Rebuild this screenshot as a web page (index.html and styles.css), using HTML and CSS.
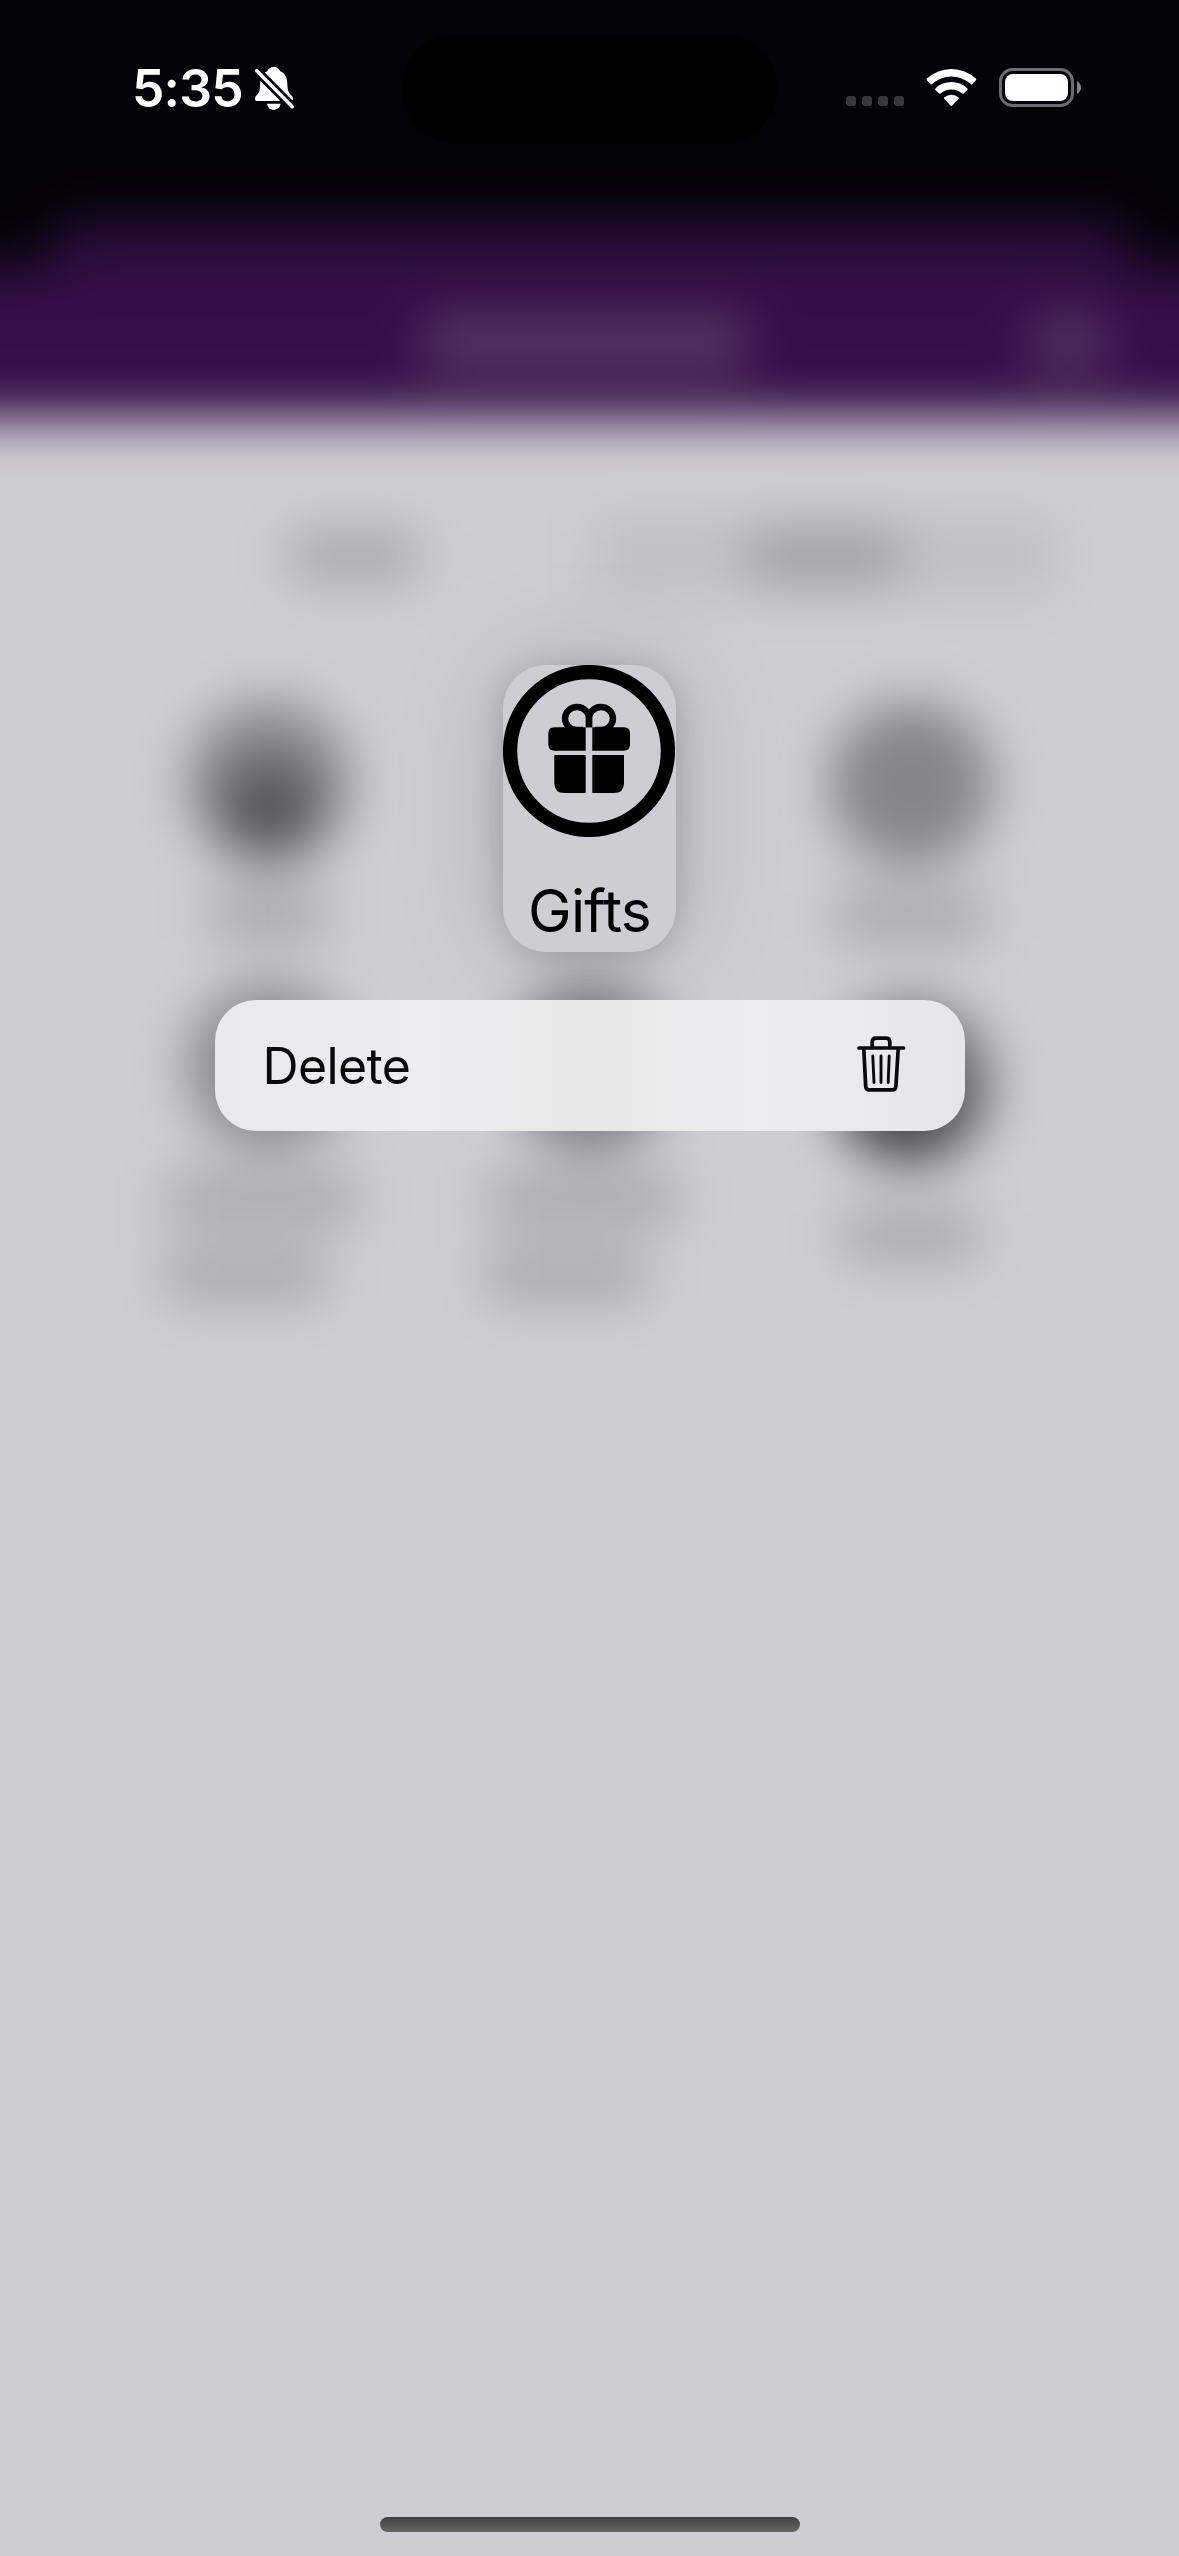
FILE: index.html
```html
<!DOCTYPE html>
<html lang="en">
<head>
<meta charset="utf-8">
<title>Gifts</title>
<link rel="stylesheet" href="styles.css">
</head>
<body>
<div class="phone">
  <div class="backdrop" aria-hidden="true">
    <div class="sheet">
      <div class="nav"><i class="nav-title"></i><i class="nav-action"></i></div>
      <div class="tabs">
        <div class="tab"><i class="bar tab-one"></i></div>
        <div class="tab tab-active"><i class="bar tab-two"></i></div>
      </div>
      <div class="tiles">
        <div class="tile"><i class="disc disc-person"></i><i class="bar w110"></i></div>
        <div class="tile"></div>
        <div class="tile"><i class="disc disc-solid"></i><i class="bar w130"></i></div>
      </div>
      <div class="tiles second">
        <div class="tile"><i class="disc"></i><i class="bar w190"></i><i class="bar w160"></i></div>
        <div class="tile"><i class="disc disc-mid"></i><i class="bar w190"></i><i class="bar w160"></i></div>
        <div class="tile tile-last"><i class="disc disc-dark"></i><i class="bar w125"></i></div>
      </div>
    </div>
  </div>

  <div class="screen">
    <header class="status">
      <div class="status-left">
        <span class="time">5:35</span>
        <svg class="bell" viewBox="0 0 40 44">
          <path fill="#fff" d="M19.7 1C23 1 25.500 3 26.300 5.300C31 7 33 11.500 33.300 17C33.500 23 34 26 36.500 28.500L38.600 31C39.800 33 39 35 36.500 35H3.500C1 35 .2 32.800 1.200 31C2.400 29 4.500 28 5.500 24.500C6.500 21 5.500 15 7.500 11C8.700 8 10.800 6.200 13.200 5.300C14 3 16.500 1 19.700 1ZM13 37.700H26.500C26 41.500 23.500 43.700 19.700 43.700S13.500 41.500 13 37.700Z"/>
          <path stroke="#030207" stroke-width="9" d="M0 2L41 43.400"/>
          <path stroke="#fff" stroke-width="3.500" stroke-linecap="round" d="M2.700 4.700L38.300 40.700"/>
        </svg>
      </div>
      <div class="island"></div>
      <div class="status-right">
        <div class="signal"><i></i><i></i><i></i><i></i></div>
        <svg class="wifi" viewBox="0 0 51 39" fill="#fff">
          <path d="M.9 12.200Q.3 11.300 1 10.600A35.500 35.500 0 0 1 49.800 10.600Q50.500 11.300 49.900 12.200L46.200 16.200Q45.500 16.800 44.700 16.100A28.500 28.500 0 0 0 6.100 16.100Q5.300 16.800 4.600 16.200Z"/>
          <path d="M9.400 21.900Q8.800 21.100 9.500 20.400A22.800 22.800 0 0 1 41.300 20.400Q42 21.100 41.400 21.900L37.700 25.500Q37 26.100 36.200 25.500A16.500 16.500 0 0 0 14.600 25.500Q13.800 26.100 13.100 25.500Z"/>
          <path d="M18.200 30.900Q17.600 30 18.400 29.300A10.500 10.500 0 0 1 32.400 29.300Q33.200 30 32.600 30.900L26.200 37.600Q25.400 38.300 24.600 37.600Z"/>
        </svg>
        <svg class="battery" viewBox="0 0 83 39">
          <rect x="1.500" y="1.500" width="72" height="36" rx="12" fill="none" stroke="#6c6b6e" stroke-width="3"/>
          <rect x="6" y="6" width="63" height="27" rx="8" fill="#fff"/>
          <path d="M78 13Q82 15.500 82 19.500T78 26Z" fill="#848386"/>
        </svg>
      </div>
    </header>

    <main class="content">
      <div class="preview">
        <svg class="gift" viewBox="0 0 172 172">
          <circle cx="86" cy="86" r="78.900" fill="none" stroke="#000" stroke-width="14.300"/>
          <g fill="none" stroke="#000" stroke-width="6.400">
            <path d="M86 62.300V54A12 11.500 0 1 0 73.800 65H80"/>
            <path d="M86 62.300V54A12 11.500 0 1 1 98.200 65H92"/>
          </g>
          <path d="M51.500 62.300H82.700V85.700H51.500Q45.300 85.700 45.300 79.500V68.500Q45.300 62.300 51.500 62.300ZM89.300 62.300H120.800Q127 62.300 127 68.500V79.500Q127 85.700 120.800 85.700H89.300ZM51.300 90H82.700V128H61.500Q51.300 128 51.300 118ZM89.300 90H121V118Q121 128 110.800 128H89.300Z"/>
        </svg>
        <span class="preview-label">Gifts</span>
      </div>
      <div class="menu">
        <span class="menu-label">Delete</span>
        <svg class="trash" viewBox="0 0 50 58" fill="none" stroke="#0a0a0a" stroke-linecap="round" stroke-linejoin="round">
          <path stroke-width="3.700" d="M3 13H47.500M7.800 14L9.700 51.300Q10 54.900 13.600 54.900H36Q39.600 54.900 39.900 51.300L42.200 14M16.200 12V7Q16.200 3.200 20 3.200H30Q33.800 3.200 33.800 7V12"/>
          <path stroke-width="2.900" d="M16.800 21L18 47.500M25 21V47.500M33.200 21L32.200 47.500"/>
        </svg>
      </div>
    </main>
    <div class="home"></div>
  </div>
</div>
</body>
</html>
```
FILE: styles.css
```css
* { box-sizing: border-box; }
body { margin: 0; font-family: Inter, "Liberation Sans", sans-serif; }
i, svg { display: block; flex: none; }

.phone {
  position: relative;
  width: 1179px;
  height: 2556px;
  overflow: hidden;
  background: #cecdd2;
}

/* Dimmed, blurred app behind the context menu */
.backdrop {
  position: absolute;
  inset: -100px;
  padding-top: 322px;
  background: #030207;
  filter: blur(26px);
}
.sheet {
  height: 2534px;
  margin: 0 -100px;
  padding: 0 200px;
  background: #cecdd2;
}
.nav {
  display: flex;
  align-items: center;
  justify-content: flex-end;
  gap: 282px;
  height: 197px;
  margin: 0 -200px;
  padding: 44px 270px 0 0;
  background:
    linear-gradient(#030207, #030207) 0 0 / 255px 42px no-repeat,
    linear-gradient(#030207, #030207) 100% 0 / 255px 42px no-repeat,
    linear-gradient(#2b0e3b, #340f4a 45%, #351049);
}
.nav-title { width: 322px; height: 56px; background: #563967; }
.nav-action { width: 80px; height: 56px; background: #543765; border-radius: 24px; }

.tabs {
  display: flex;
  height: 84px;
  margin: 95px 119px 0;
}
.tab { flex: 1; display: flex; align-items: center; justify-content: center; }
.tab-active { background: #c1c0c5; }
.bar { height: 50px; background: #a7a6ab; }
.tab-one { width: 130px; }
.tab-two { width: 150px; background: #9e9da2; }

.tiles {
  display: grid;
  grid-template-columns: repeat(3, 321px);
  justify-content: center;
  margin-top: 102px;
}
.tiles.second { margin-top: 42px; }
.tile { display: flex; flex-direction: column; align-items: center; gap: 26px; }
.disc { width: 164px; height: 164px; border-radius: 50%; background: #89888d; }
.disc-mid { background: #77767b; }
.disc-solid { margin-top: 2px; background: #86858a; }
.disc-person { background: radial-gradient(circle at 50% 66%, #505054 18%, #8b8a8f 48%); }
.disc-dark { background: radial-gradient(circle at 44% 68%, #454549 24%, #78777b 60%); }
.tile-last { padding-top: 16px; gap: 46px; }
.w110 { width: 115px; }
.w130 { width: 150px; }
.w190 { width: 190px; margin-right: 14px; }
.w160 { width: 160px; margin-right: 48px; }
.w125 { width: 135px; }

/* Sharp foreground */
.screen {
  position: relative;
  display: flex;
  flex-direction: column;
  align-items: center;
  height: 100%;
}
.status {
  display: grid;
  grid-template-columns: 402px 375px 402px;
  width: 100%;
  height: 144px;
  padding-top: 34px;
}
.status-left { display: flex; padding: 23px 0 0 132px; }
.time {
  width: 122px;
  font-size: 51.5px;
  line-height: 62px;
  font-weight: 560;
  letter-spacing: -.8px;
  color: #fff;
}
.bell { width: 40px; height: 44px; margin-top: 9px; }
.island { height: 110px; border-radius: 55px; background: #000; }
.status-right { display: flex; padding: 34px 0 0 69px; }
.signal { display: flex; gap: 6px; padding-top: 28px; }
.signal i { width: 10px; height: 10px; border-radius: 3.5px; background: #39383d; }
.wifi { width: 51px; height: 39px; margin-left: 22px; }
.battery { width: 83px; height: 39px; margin-left: 22px; }

.content {
  display: flex;
  flex-direction: column;
  align-items: center;
  gap: 48px;
  padding-top: 521px;
}
.preview {
  display: flex;
  flex-direction: column;
  align-items: center;
  width: 173px;
  height: 287px;
  border-radius: 43px;
  background: #cecdd2;
  box-shadow: 0 0 110px rgba(0, 0, 0, .17), 0 4px 30px rgba(0, 0, 0, .16);
}
.gift { width: 172px; height: 172px; margin-right: 1px; }
.preview-label {
  margin-top: 39px;
  font-size: 58.5px;
  line-height: 70px;
  letter-spacing: -.8px;
  color: #000;
}
.menu {
  display: flex;
  align-items: center;
  justify-content: space-between;
  width: 750px;
  height: 131px;
  padding: 0 59px 0 48px;
  border-radius: 41px;
  background: linear-gradient(90deg, #e9e9eb, #ededef 28%, #e7e7e8 50%, #ededef 72%, #e6e6e8);
}
.menu-label {
  font-size: 50px;
  line-height: 62px;
  letter-spacing: -.6px;
  color: #0a0a0a;
}
.trash { width: 50px; height: 58px; margin-bottom: 4px; }
.home {
  width: 420px;
  height: 15px;
  margin: auto 0 24px;
  border-radius: 8px;
  background: linear-gradient(#404040, #666668);
}
```
